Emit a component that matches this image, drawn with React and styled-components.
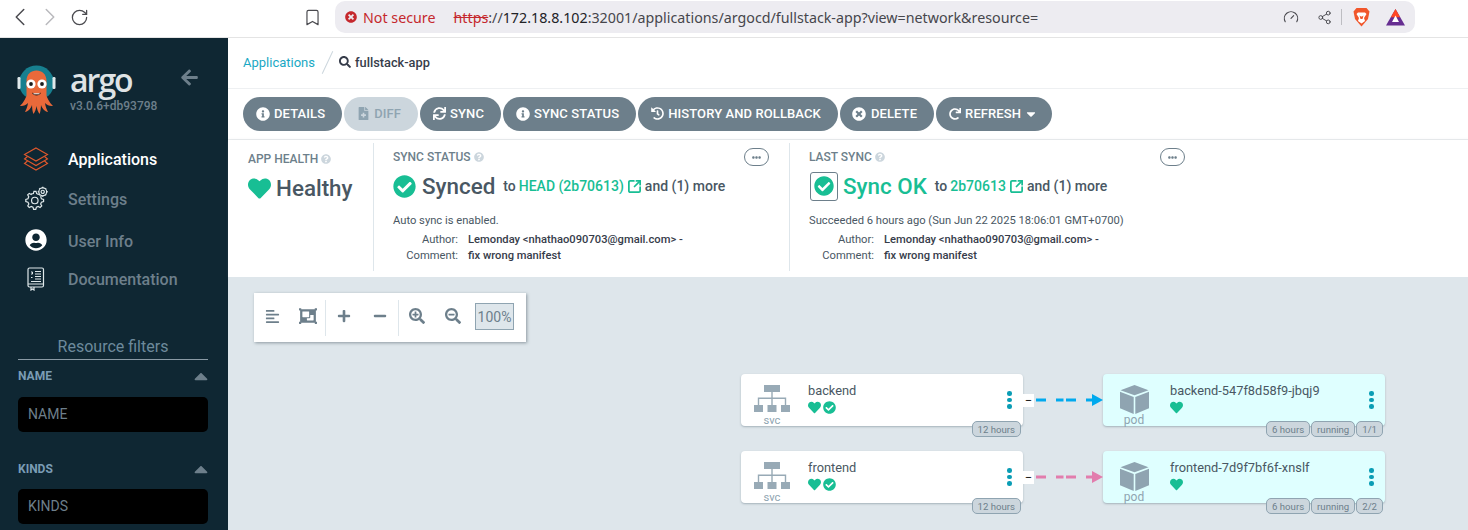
import React from "react";
import styled, { createGlobalStyle } from "styled-components";
import {
  FaInfoCircle,
  FaFileMedical,
  FaSync,
  FaHistory,
  FaTimesCircle,
  FaRedo,
  FaCaretDown,
  FaHeart,
  FaCheckCircle,
  FaSearch,
  FaQuestionCircle,
  FaEllipsisH,
  FaAlignLeft,
  FaObjectGroup,
  FaPlus,
  FaMinus,
  FaSearchPlus,
  FaSearchMinus,
  FaArrowLeft,
  FaUserCircle,
  FaCaretUp,
} from "react-icons/fa";
import {
  LuChevronLeft,
  LuChevronRight,
  LuRotateCw,
  LuBookmark,
  LuGauge,
  LuShare2,
  LuSquareArrowOutUpRight,
} from "react-icons/lu";

const GREEN = "#18be94";
const GRAY = "#6d7f8b";
const TEXT = "#495763";

const Global = createGlobalStyle`
  html, body {
    margin: 0;
    height: 530px;
    overflow: hidden;
    background: #fff;
    font-family: Roboto, "Liberation Sans", sans-serif;
  }
`;

const Page = styled.div`
  width: 1468px;
  height: 530px;
  display: flex;
  flex-direction: column;
  overflow: hidden;
`;

const BrowserBar = styled.div`
  height: 37px;
  flex: none;
  display: flex;
  align-items: flex-start;
  background: #fff;
  border-bottom: 1px solid #e4e4e4;
  font-family: "Noto Sans", sans-serif;
`;

const NavIcons = styled.div`
  width: 303px;
  height: 34px;
  display: flex;
  align-items: center;
  padding-left: 5px;
  box-sizing: border-box;
  color: #4a4a4f;
  svg:nth-child(2) {
    color: #b9b9bd;
  }
  svg:nth-child(3) {
    margin-left: 5px;
  }
`;

const Bookmark = styled.div`
  width: 32px;
  height: 34px;
  display: flex;
  align-items: center;
  color: #4a4a4f;
`;

const AddressBar = styled.div`
  width: 1080px;
  height: 32px;
  margin-top: 1px;
  display: flex;
  align-items: center;
  box-sizing: border-box;
  padding: 0 10px 0 10px;
  background: #edecf1;
  border-radius: 10px;
  font-size: 14.28px;
  color: #46464c;
`;

const NotSecure = styled.span`
  display: flex;
  align-items: center;
  gap: 6px;
  color: #c5282d;
  margin-right: 18px;
`;

const Https = styled.span`
  color: #c5282d;
  text-decoration: line-through;
`;

const Host = styled.span`
  color: #222227;
`;

const AddressIcons = styled.div`
  margin-left: auto;
  display: flex;
  align-items: center;
  color: #46464c;
`;

const VSep = styled.span`
  width: 1px;
  height: 16px;
  background: #bdbdc2;
  margin: 0 11px 0 9px;
`;

const Body = styled.div`
  flex: 1;
  display: flex;
  min-height: 0;
`;

const Sidebar = styled.aside`
  width: 228px;
  flex: none;
  background: #0f2733;
  display: flex;
  flex-direction: column;
`;

const Brand = styled.div`
  height: 102px;
  flex: none;
  display: flex;
  align-items: flex-start;
  padding: 25px 0 0 17px;
  box-sizing: border-box;
`;

const BrandText = styled.div`
  margin-left: 13px;
  margin-top: 1px;
  width: 110px;
`;

const Wordmark = styled.div`
  font-family: "Open Sans", sans-serif;
  font-size: 32px;
  line-height: 31px;
  font-weight: 600;
  letter-spacing: -2px;
  color: #dfe3e5;
`;

const Version = styled.div`
  font-size: 12px;
  line-height: 14px;
  font-weight: 500;
  color: ${GRAY};
  margin-top: 4px;
`;

const BackArrow = styled.div`
  margin-top: 5px;
  font-size: 19px;
  line-height: 19px;
  color: ${GRAY};
`;

const NavItem = styled.div`
  height: 38px;
  margin-top: ${({ $gap }) => $gap || 0}px;
  display: flex;
  align-items: center;
  font-size: 16px;
  font-weight: 500;
  color: ${({ $active }) => ($active ? "#fff" : GRAY)};
`;

const NavIcon = styled.div`
  width: 68px;
  display: flex;
  justify-content: center;
  padding-left: 4px;
  margin-top: ${({ $dy }) => $dy || 0}px;
  box-sizing: border-box;
`;

const FilterTitle = styled.div`
  margin: 39px 20px 0 18px;
  padding-bottom: 3px;
  border-bottom: 1px solid #8a9aa5;
  text-align: center;
  font-size: 16px;
  line-height: 19px;
  color: #6d8a9c;
`;

const FilterHead = styled.div`
  margin: ${({ $top }) => $top}px 20px 0 18px;
  height: 14px;
  display: flex;
  align-items: center;
  justify-content: space-between;
  font-size: 12px;
  font-weight: 700;
  color: #7a9cb5;
  svg {
    color: ${GRAY};
    font-size: 22px;
    margin-right: -4px;
  }
`;

const FilterInput = styled.input`
  display: block;
  width: 190px;
  height: 35px;
  margin: ${({ $top }) => $top}px 20px 0 18px;
  padding: 0 10px 2px;
  box-sizing: border-box;
  border: 0;
  border-radius: 5px;
  background: #000;
  font: 14px Roboto, sans-serif;
  color: #fff;
  &::placeholder {
    color: ${GRAY};
    opacity: 1;
  }
`;

const Main = styled.main`
  flex: 1;
  min-width: 0;
  display: flex;
  flex-direction: column;
`;

const Breadcrumb = styled.div`
  height: 48px;
  flex: none;
  display: flex;
  align-items: center;
  padding: 0 0 2px 15px;
  border-bottom: 1px solid #eef0f2;
  font-size: 13px;
`;

const Crumb = styled.span`
  color: #1aa8c4;
`;

const Slash = styled.span`
  width: 1px;
  height: 25px;
  margin: 0 11px 0 12px;
  background: #ccd6dd;
  transform: rotate(25deg);
`;

const Current = styled.span`
  display: flex;
  align-items: center;
  gap: 4px;
  color: #363c4a;
  font-weight: 500;
  font-size: 12.8px;
`;

const Toolbar = styled.div`
  height: 50px;
  flex: none;
  display: flex;
  align-items: center;
  gap: 2px;
  padding-left: 15px;
  border-bottom: 1px solid #eef0f2;
`;

const ActionButton = styled.div`
  height: 34px;
  display: flex;
  align-items: center;
  gap: 4.5px;
  padding: 0 17px 1px 12.5px;
  box-sizing: border-box;
  border-radius: 17px;
  background: ${({ $disabled }) => ($disabled ? "#ccd6dd" : GRAY)};
  color: ${({ $disabled }) => ($disabled ? "#8fa4b1" : "#fff")};
  font-size: 13px;
  font-weight: 500;
  letter-spacing: 0.1px;
  white-space: nowrap;
`;

const StatusPanel = styled.div`
  height: 137px;
  flex: none;
  display: flex;
  background: #fff;
  box-shadow: 1px 1px 3px rgba(109, 127, 139, 0.4);
  position: relative;
  padding-top: 3px;
  box-sizing: border-box;
`;

const StatusCol = styled.div`
  width: ${({ $w }) => $w}px;
  height: 128px;
  box-sizing: border-box;
  padding: ${({ $pt }) => $pt || 7}px 0 0 ${({ $pl }) => $pl}px;
  border-right: ${({ $line }) => ($line ? "1px solid #dee6eb" : "0")};
  position: relative;
`;

const StatusLabel = styled.div`
  display: flex;
  align-items: center;
  gap: 3px;
  font-size: 12px;
  line-height: 14px;
  font-weight: 500;
  color: ${GRAY};
  svg {
    color: #ccd6dd;
    font-size: 10px;
  }
`;

const MoreButton = styled.div`
  position: absolute;
  top: 5px;
  left: 370px;
  width: 25px;
  height: 18px;
  box-sizing: border-box;
  border: 1px solid ${GRAY};
  border-radius: 9px;
  display: flex;
  align-items: center;
  justify-content: center;
  font-size: 9px;
  color: ${GRAY};
`;

const Headline = styled.div`
  display: flex;
  align-items: center;
  height: 30px;
  margin-top: 7px;
  font-size: 22.4px;
  font-weight: 500;
  color: ${TEXT};
`;

const HeadIcon = styled.span`
  display: flex;
  color: ${GREEN};
  margin-right: ${({ $mr }) => $mr || 6}px;
`;

const SyncBox = styled.span`
  width: 28px;
  height: 29px;
  box-sizing: border-box;
  border: 1px solid ${GRAY};
  border-radius: 3px;
  display: flex;
  align-items: center;
  justify-content: center;
  color: ${GREEN};
  margin: 0 5px 0 1px;
`;

const HeadStatus = styled.span`
  color: ${({ $ok }) => ($ok ? GREEN : TEXT)};
  margin-right: 8px;
`;

const HeadDetail = styled.span`
  display: flex;
  align-items: center;
  gap: 3px;
  font-size: 14px;
  color: ${TEXT};
`;

const RevLink = styled.span`
  color: ${GREEN};
  display: flex;
  align-items: center;
  gap: 3px;
`;

const Note = styled.div`
  margin: 12px 0 3px;
  font-size: 11.2px;
  line-height: 16px;
  color: ${TEXT};
`;

const MetaRow = styled.div`
  display: flex;
  font-size: 11.2px;
  line-height: 16px;
  color: ${TEXT};
`;

const MetaKey = styled.span`
  width: 65px;
  text-align: right;
  margin-right: 10px;
`;

const MetaValue = styled.span`
  font-weight: 500;
  color: #363c4a;
`;

const Canvas = styled.div`
  flex: 1;
  position: relative;
  background: #dee6eb;
  overflow: hidden;
  padding: 16px 0 0 26px;
`;

const GraphTools = styled.div`
  width: 272px;
  height: 49px;
  box-sizing: border-box;
  display: flex;
  align-items: center;
  background: #fff;
  box-shadow: 1px 1px 3px rgba(73, 87, 99, 0.55);
  color: ${GRAY};
`;

const ToolGroup = styled.div`
  height: 36px;
  display: flex;
  align-items: center;
  border-right: ${({ $line }) => ($line ? "1px solid #dee6eb" : "0")};
`;

const ToolIcon = styled.div`
  width: ${({ $w }) => $w || 36}px;
  display: flex;
  justify-content: center;
  margin-top: -3px;
`;

const Zoom100 = styled.div`
  width: 39px;
  height: 27px;
  margin: -2px 0 0 4px;
  box-sizing: border-box;
  border: 1px solid #8fa4b1;
  background: #dee6eb;
  color: ${GRAY};
  font-size: 14px;
  display: flex;
  align-items: center;
  justify-content: center;
`;

const Node = styled.div`
  position: absolute;
  left: ${({ $x }) => $x}px;
  top: ${({ $y }) => $y}px;
  width: 282px;
  height: 52px;
  display: flex;
  border-radius: 4px;
  background: ${({ $pod }) => ($pod ? "#dfffff" : "#fff")};
  box-shadow: 0 1px 2px rgba(109, 127, 139, 0.5);
  color: ${TEXT};
`;

const NodeKind = styled.div`
  width: 62px;
  margin-right: 5px;
  flex: none;
  display: flex;
  flex-direction: column;
  align-items: center;
  padding-top: 11px;
  box-sizing: border-box;
`;

const KindLabel = styled.div`
  font-size: ${({ $pod }) => ($pod ? 12 : 11.2)}px;
  line-height: 11px;
  color: #8fa4b1;
  margin-top: ${({ $pod }) => ($pod ? 1 : 3)}px;
`;

const NodeInfo = styled.div`
  flex: 1;
  padding-top: 9px;
  font-size: 12.8px;
  line-height: 16px;
`;

const NodeIcons = styled.div`
  display: flex;
  align-items: center;
  gap: 2px;
  height: 14px;
  margin-top: 1px;
  color: ${GREEN};
  font-size: 13px;
`;

const Kebab = styled.div`
  width: 27px;
  flex: none;
  display: flex;
  flex-direction: column;
  align-items: center;
  justify-content: center;
  gap: 2px;
  span {
    width: 4.5px;
    height: 4.5px;
    border-radius: 50%;
    background: #0a9db5;
  }
`;

const Tags = styled.div`
  position: absolute;
  right: 2px;
  bottom: -11px;
  display: flex;
  gap: 1px;
`;

const Tag = styled.div`
  height: 16px;
  padding: 0 5px;
  display: flex;
  align-items: center;
  box-sizing: border-box;
  border: 1px solid #8fa4b1;
  border-radius: 5px;
  background: #ccd6dd;
  color: ${GRAY};
  font-size: 9.6px;
`;

const Collapse = styled.div`
  position: absolute;
  left: 282px;
  top: 20px;
  width: 11px;
  height: 13px;
  display: flex;
  align-items: center;
  justify-content: center;
  background: #fff;
  color: #222;
  font-size: 13px;
  line-height: 13px;
`;

const Edge = styled.svg`
  position: absolute;
  left: ${({ $x }) => $x}px;
  top: ${({ $y }) => $y}px;
`;

const ArgoLogo = () => (
  <svg width="40" height="52" viewBox="0 0 40 52">
    <circle cx="19.5" cy="20" r="17.5" fill="#177f8f" />
    <rect x="0.5" y="14" width="3" height="12" rx="1.2" fill="#dfe8ea" />
    <rect x="35.5" y="14" width="3" height="12" rx="1.2" fill="#dfe8ea" />
    <path
      d="M9.5 18C9.5 11 14 7.5 19.5 7.5S29.5 11 29.5 18V33C32 39 35 42 36 43C33 43.5 30 42 28 40C28.5 44 30 47 31 49C28 48.5 25 45.5 24 42C23.8 46 23.5 49 22.5 51C21 49 20 46 19.5 43C19 46 18 49 16.5 51C15.5 49 15.2 46 15 42C14 45.5 11 48.5 8 49C9 47 10.5 44 11 40C9 42 6 43.5 3 43C4 42 7 39 9.5 33Z"
      fill="#e9693a"
    />
    <circle cx="14" cy="21" r="4.6" fill="#fff" />
    <circle cx="25" cy="21" r="4.6" fill="#fff" />
    <circle cx="14" cy="21" r="1.9" fill="#1c1c1c" />
    <circle cx="25" cy="21" r="1.9" fill="#1c1c1c" />
    <path d="M15 29.5C17 31 22 31 24 29.5C23.5 33.5 15.5 33.5 15 29.5Z" fill="#3a1a10" />
    <path d="M16.5 30.3H22.5V31.3H16.5Z" fill="#fff" />
  </svg>
);

const StackIcon = () => (
  <svg width="26" height="24" viewBox="0 0 26 24" fill="none" stroke="#e0582c" strokeWidth="1.1">
    <path d="M13 1L24.5 7.5L13 14L1.5 7.5Z" />
    <path d="M4.5 9.5L1.5 12L13 18.5L24.5 12L21.5 9.5" />
    <path d="M4.5 14L1.5 16.5L13 23L24.5 16.5L21.5 14" />
  </svg>
);

const GearsIcon = () => (
  <svg width="26" height="26" viewBox="0 0 24 24" fill="none" stroke="#dfe8ea" strokeWidth="1.1">
    <path d="M8 7.2L9.6 7L10.1 5H12L12.6 7L14.2 7.8L16 6.8L17.4 8.2L16.4 10L17 11.8L19 12.4V14.4L17 15L16.3 16.6L17.3 18.4L15.8 19.8L14 18.8L12.4 19.5L11.8 21.5H9.8L9.2 19.5L7.6 18.8L5.8 19.8L4.4 18.4L5.4 16.6L4.6 15L2.6 14.4V12.4L4.6 11.8L5.3 10L4.3 8.2L5.8 6.8L7.6 7.8Z" />
    <circle cx="10.9" cy="13.4" r="3" />
    <circle cx="18.2" cy="5.4" r="3.6" fill="#0f2733" />
    <circle cx="18.2" cy="5.4" r="1.5" />
    <path d="M18.2 0.8V1.8M18.2 9V10M13.6 5.4H14.6M21.8 5.4H22.8M15 2.2L15.6 2.8M20.8 8L21.4 8.6M21.4 2.2L20.8 2.8M15.6 8L15 8.6" strokeWidth="1.4" />
  </svg>
);

const DocIcon = () => (
  <svg width="18" height="24" viewBox="0 0 18 24" fill="none" stroke="#dfe8ea" strokeWidth="1.2">
    <rect x="1" y="1" width="15.5" height="19" rx="1.5" />
    <path d="M1 17H16.5M4 20V23L5.5 22L7 23V20" />
    <path d="M4 5H5.5V7H4M4 10.5H5.5M8 4.5H14M8 7H14M8 9.5H14M8 12H14M4 14.5H14" strokeWidth="1" />
  </svg>
);

const SvcIcon = () => (
  <svg width="36" height="27" viewBox="0 0 36 27" fill="#98aab6">
    <rect x="10" y="0" width="16" height="7" />
    <rect x="0" y="20" width="9" height="7" />
    <rect x="13.5" y="20" width="9" height="7" />
    <rect x="27" y="20" width="9" height="7" />
    <path d="M17.3 7H18.7V12.5H32.2V20H30.8V14H18.7V20H17.3V14H5.2V20H3.8V12.5H17.3Z" />
  </svg>
);

const PodIcon = () => (
  <svg width="29" height="29" viewBox="0 0 29 29" fill="#8fa4b1">
    <path d="M14.5 0L28.5 5.2L14.5 10.3L0.5 5.2Z" />
    <path d="M0 6.8L13.7 11.9V29L0 23.2Z" />
    <path d="M29 6.8L15.3 11.9V29L29 23.2Z" />
  </svg>
);

const BraveIcon = () => (
  <svg width="17" height="20" viewBox="0 0 17 20">
    <path d="M3.5 1H13.5L16.5 4.5L15 12L8.5 19.5L2 12L0.5 4.5Z" fill="#f1562b" />
    <path d="M5 5.5H12L13.5 7L11 11L12 14L8.5 16.5L5 14L6 11L3.5 7Z" fill="#fff" />
    <path d="M6.5 8.5L8 9.5H9L10.5 8.5L9.5 12H7.5Z" fill="#f1562b" />
  </svg>
);

const BatIcon = () => (
  <svg width="19" height="17" viewBox="0 0 19 17">
    <path d="M9.5 0L19 16.5H0Z" fill="#662d91" />
    <path d="M9.5 0L14.2 8.2H4.8Z" fill="#ff4724" />
    <path d="M9.5 6.5L13 13H6Z" fill="#fff" />
  </svg>
);

const buttons = [
  { label: "DETAILS", icon: <FaInfoCircle size={14} /> },
  { label: "DIFF", icon: <FaFileMedical size={13} />, disabled: true },
  { label: "SYNC", icon: <FaSync size={13} /> },
  { label: "SYNC STATUS", icon: <FaInfoCircle size={14} /> },
  { label: "HISTORY AND ROLLBACK", icon: <FaHistory size={13} /> },
  { label: "DELETE", icon: <FaTimesCircle size={14} /> },
  { label: "REFRESH", icon: <FaRedo size={12} />, caret: true },
];

const nodes = [
  { name: "backend", x: 513, y: 97, tags: ["12 hours"], color: "#00a9ee" },
  { name: "frontend", x: 513, y: 174, tags: ["12 hours"], color: "#e27dad" },
  { name: "backend-547f8d58f9-jbqj9", x: 875, y: 97, pod: true, tags: ["6 hours", "running", "1/1"] },
  { name: "frontend-7d9f7bf6f-xnslf", x: 875, y: 174, pod: true, tags: ["6 hours", "running", "2/2"] },
];

const Meta = () => (
  <>
    <MetaRow>
      <MetaKey>Author:</MetaKey>
      <MetaValue>Lemonday &lt;nhathao090703@gmail.com&gt; -</MetaValue>
    </MetaRow>
    <MetaRow>
      <MetaKey>Comment:</MetaKey>
      <MetaValue>fix wrong manifest</MetaValue>
    </MetaRow>
  </>
);

const App = () => {
  return (
    <Page>
      <Global />
      <BrowserBar>
        <NavIcons>
          <LuChevronLeft size={30} strokeWidth={1.2} />
          <LuChevronRight size={30} strokeWidth={1.2} />
          <LuRotateCw size={19} strokeWidth={1.6} />
        </NavIcons>
        <Bookmark>
          <LuBookmark size={19} strokeWidth={1.5} />
        </Bookmark>
        <AddressBar>
          <NotSecure>
            <FaTimesCircle size={12} />
            Not secure
          </NotSecure>
          <Https>https</Https>
          ://
          <Host>172.18.8.102</Host>
          :32001/applications/argocd/fullstack-app?view=network&amp;resource=
          <AddressIcons>
            <LuGauge size={16} strokeWidth={1.6} style={{ marginRight: 18 }} />
            <LuShare2 size={15} strokeWidth={1.5} />
            <VSep />
            <BraveIcon />
            <span style={{ width: 16 }} />
            <BatIcon />
          </AddressIcons>
        </AddressBar>
      </BrowserBar>
      <Body>
        <Sidebar>
          <Brand>
            <ArgoLogo />
            <BrandText>
              <Wordmark>argo</Wordmark>
              <Version>v3.0.6+db93798</Version>
            </BrandText>
            <BackArrow>
              <FaArrowLeft />
            </BackArrow>
          </Brand>
          <NavItem $active>
            <NavIcon>
              <StackIcon />
            </NavIcon>
            Applications
          </NavItem>
          <NavItem $gap={2}>
            <NavIcon>
              <GearsIcon />
            </NavIcon>
            Settings
          </NavItem>
          <NavItem $gap={4}>
            <NavIcon $dy={-3}>
              <FaUserCircle size={22} color="#fff" />
            </NavIcon>
            User Info
          </NavItem>
          <NavItem>
            <NavIcon>
              <DocIcon />
            </NavIcon>
            Documentation
          </NavItem>
          <FilterTitle>Resource filters</FilterTitle>
          <FilterHead $top={9}>
            NAME
            <FaCaretUp />
          </FilterHead>
          <FilterInput $top={14} placeholder="NAME" readOnly />
          <FilterHead $top={30}>
            KINDS
            <FaCaretUp />
          </FilterHead>
          <FilterInput $top={13} placeholder="KINDS" readOnly />
        </Sidebar>
        <Main>
          <Breadcrumb>
            <Crumb>Applications</Crumb>
            <Slash />
            <Current>
              <FaSearch size={12} />
              fullstack-app
            </Current>
          </Breadcrumb>
          <Toolbar>
            {buttons.map((b) => (
              <ActionButton key={b.label} $disabled={b.disabled}>
                {b.icon}
                {b.label}
                {b.caret && <FaCaretDown size={14} style={{ margin: "0 -3px 0 -2px" }} />}
              </ActionButton>
            ))}
          </Toolbar>
          <StatusPanel>
            <StatusCol $w={146} $pl={20} $line $pt={9}>
              <StatusLabel>
                APP HEALTH <FaQuestionCircle />
              </StatusLabel>
              <Headline>
                <HeadIcon $mr={5}>
                  <FaHeart size={23} />
                </HeadIcon>
                Healthy
              </Headline>
            </StatusCol>
            <StatusCol $w={416} $pl={19} $line>
              <StatusLabel>
                SYNC STATUS <FaQuestionCircle />
              </StatusLabel>
              <MoreButton>
                <FaEllipsisH />
              </MoreButton>
              <Headline>
                <HeadIcon $mr={6}>
                  <FaCheckCircle size={23} />
                </HeadIcon>
                <HeadStatus>Synced</HeadStatus>
                <HeadDetail>
                  to
                  <RevLink>
                    HEAD (2b70613)
                    <LuSquareArrowOutUpRight size={15} strokeWidth={2.8} />
                  </RevLink>
                  and (1) more
                </HeadDetail>
              </Headline>
              <Note>Auto sync is enabled.</Note>
              <Meta />
            </StatusCol>
            <StatusCol $w={400} $pl={19}>
              <StatusLabel>
                LAST SYNC <FaQuestionCircle />
              </StatusLabel>
              <MoreButton>
                <FaEllipsisH />
              </MoreButton>
              <Headline>
                <SyncBox>
                  <FaCheckCircle size={20} />
                </SyncBox>
                <HeadStatus $ok>Sync OK</HeadStatus>
                <HeadDetail>
                  to
                  <RevLink>
                    2b70613
                    <LuSquareArrowOutUpRight size={15} strokeWidth={2.8} />
                  </RevLink>
                  and (1) more
                </HeadDetail>
              </Headline>
              <Note>Succeeded 6 hours ago (Sun Jun 22 2025 18:06:01 GMT+0700)</Note>
              <Meta />
            </StatusCol>
          </StatusPanel>
          <Canvas>
            <GraphTools>
              <ToolGroup $line>
                <ToolIcon>
                  <FaAlignLeft size={15} />
                </ToolIcon>
                <ToolIcon $w={35}>
                  <FaObjectGroup size={18} />
                </ToolIcon>
              </ToolGroup>
              <ToolGroup $line>
                <ToolIcon>
                  <FaPlus size={14} />
                </ToolIcon>
                <ToolIcon>
                  <FaMinus size={14} />
                </ToolIcon>
              </ToolGroup>
              <ToolGroup>
                <ToolIcon>
                  <FaSearchPlus size={16} />
                </ToolIcon>
                <ToolIcon>
                  <FaSearchMinus size={16} />
                </ToolIcon>
                <Zoom100>100%</Zoom100>
              </ToolGroup>
            </GraphTools>
            {nodes.map((n) => (
              <Node key={n.name} $x={n.x} $y={n.y} $pod={n.pod}>
                <NodeKind>
                  {n.pod ? <PodIcon /> : <SvcIcon />}
                  <KindLabel $pod={n.pod}>{n.pod ? "pod" : "svc"}</KindLabel>
                </NodeKind>
                <NodeInfo>
                  {n.name}
                  <NodeIcons>
                    <FaHeart />
                    {!n.pod && <FaCheckCircle />}
                  </NodeIcons>
                </NodeInfo>
                <Kebab>
                  <span />
                  <span />
                  <span />
                </Kebab>
                <Tags>
                  {n.tags.map((t) => (
                    <Tag key={t}>{t}</Tag>
                  ))}
                </Tags>
                {!n.pod && <Collapse>−</Collapse>}
              </Node>
            ))}
            {nodes
              .filter((n) => n.color)
              .map((n) => (
                <Edge key={n.name} $x={805} $y={n.y + 20} width="70" height="12" viewBox="0 0 70 12">
                  <line
                    x1="3"
                    y1="6"
                    x2="60"
                    y2="6"
                    stroke={n.color}
                    strokeWidth="3"
                    strokeDasharray="10 10 7.5 2.5 10 10 10"
                  />
                  <path d="M59 0L70 6L59 12Z" fill={n.color} />
                </Edge>
              ))}
          </Canvas>
        </Main>
      </Body>
    </Page>
  );
};

export default App;
